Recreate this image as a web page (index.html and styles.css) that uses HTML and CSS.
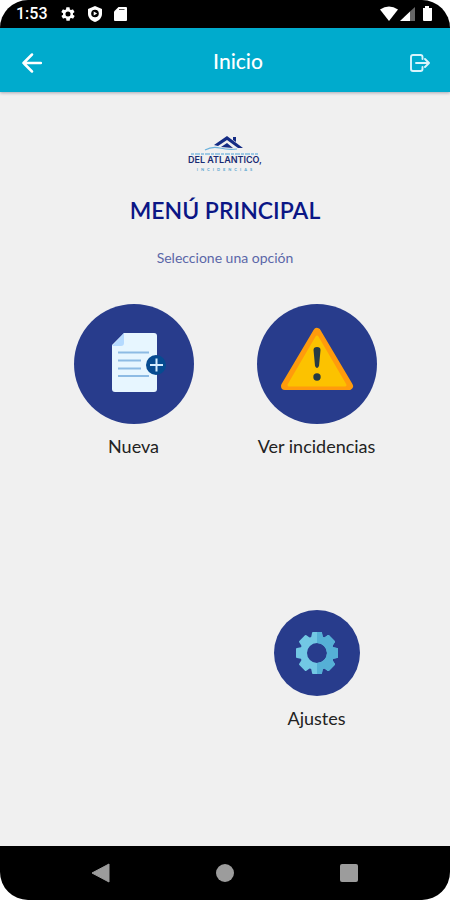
FILE: index.html
```html
<!DOCTYPE html>
<html lang="es">
<head>
<meta charset="utf-8">
<meta name="viewport" content="width=device-width, initial-scale=1">
<title>Inicio</title>
<link rel="stylesheet" href="styles.css">
</head>
<body>
<div class="phone">
  <div class="status">
    <span class="clock">1:53</span>
    <svg class="status-icon" width="16" height="16" viewBox="0 0 24 24" aria-hidden="true"><path fill="#fff" fill-rule="evenodd" d="M19.4 13a7.800 7.800 0 0 0 0-2l2.100-1.600a.5.5 0 0 0 .1-.7l-2-3.400a.5.500 0 0 0-.6-.2l-2.500 1a7.300 7.300 0 0 0-1.700-1l-.4-2.700a.5.500 0 0 0-.5-.4h-4a.5.500 0 0 0-.5.400l-.4 2.700a7.300 7.300 0 0 0-1.700 1l-2.500-1a.5.500 0 0 0-.6.200l-2 3.400a.5.500 0 0 0 .1.700L4.600 11a7.800 7.800 0 0 0 0 2l-2.100 1.600a.5.500 0 0 0-.1.700l2 3.400a.5.500 0 0 0 .6.200l2.500-1a7.300 7.300 0 0 0 1.700 1l.4 2.700c0 .2.300.4.500.4h4c.3 0 .5-.2.500-.4l.4-2.700a7.300 7.300 0 0 0 1.700-1l2.500 1c.2.100.5 0 .6-.2l2-3.400a.5.500 0 0 0-.1-.7zM12 15.800a3.800 3.800 0 1 1 0-7.600 3.800 3.800 0 0 1 0 7.600z"/></svg>
    <svg class="status-icon" width="14" height="16" viewBox="0 0 14 16" aria-hidden="true"><path fill="#fff" d="M7 0l7 3v5c0 3.500-3 7-7 8-4-1-7-4.500-7-8V3z"/><circle cx="7" cy="7.500" r="3.800" fill="#000"/><path fill="#fff" d="M5.700 5.500v4l3.500-2z"/></svg>
    <svg class="status-icon" width="13" height="16" viewBox="0 0 13 16" aria-hidden="true"><path fill="#fff" d="M4.500 1H12q1 0 1 1v12q0 1-1 1H1q-1 0-1-1V5.500z"/><path stroke="#555" stroke-width="1" d="M5 3.500h5.500"/></svg>
    <svg class="signals" width="54" height="16" viewBox="0 0 54 16" aria-hidden="true"><path fill="#fff" d="M0 3.500Q9-2.500 18 3.500L9 15z"/><path fill="#fff" d="M20 15L30 5.500V15z"/><path fill="#666" d="M30 5.500L35 1V15H30z"/><path fill="#fff" d="M45 0h4v2h3v12q0 1-1 1h-7q-1 0-1-1V2h2z"/></svg>
  </div>
  <header class="appbar">
    <button class="bar-button" type="button" aria-label="Volver"><svg width="20" height="20" viewBox="0 0 20 20"><path d="M19 10H1.500M10 1.500L1.500 10l8.500 8.500" fill="none" stroke="#fff" stroke-width="2.500" stroke-linecap="round" stroke-linejoin="round"/></svg></button>
    <h1 class="bar-title">Inicio</h1>
    <button class="bar-button" type="button" aria-label="Salir"><svg width="20" height="18" viewBox="0 0 20 18"><path d="M12.500 5V3q0-2-2-2H3Q1 1 1 3v12q0 2 2 2h7.500q2 0 2-2v-2M6 9h12.500M15 5l4 4-4 4" fill="none" stroke="#d8f4fc" stroke-width="1.900" stroke-linecap="round" stroke-linejoin="round"/></svg></button>
  </header>
  <main class="content">
    <svg class="logo" width="76" height="40" viewBox="0 0 76 40" role="img" aria-label="Del Atlántico, incidencias">
      <path d="M18 16Q25 12 33 14t17 1" fill="none" stroke="#6cb2dc" stroke-width="1.200"/>
      <path d="M27 11L40 2l16 12h-5L40 6l-9 6z" fill="#142c84"/>
      <path d="M34 13l6-4 6 5zM46 3h3v5l-3-2z" fill="#142c84"/>
      <path d="M4 20h67" stroke="#83bcdf" stroke-width="1.500" stroke-dasharray="3 1 5 1"/>
      <text class="logo-name" x="38" y="29" text-anchor="middle">DEL ATLANTICO,</text>
      <text class="logo-sub" x="39" y="37" text-anchor="middle">INCIDENCIAS</text>
    </svg>
    <h2 class="heading">MENÚ PRINCIPAL</h2>
    <p class="hint">Seleccione una opción</p>
    <nav class="menu">
      <button class="option" type="button">
        <span class="disc"><svg width="120" height="120" viewBox="0 0 120 120" aria-hidden="true">
          <path d="M50 29h30q3 0 3 3v53q0 3-3 3H41q-3 0-3-3V41z" fill="#e7f6ff"/>
          <path d="M50 29v10q0 3-3 3h-9z" fill="#b5daff"/>
          <path d="M44 48.500h31M44 56.500h23M44 64.500h23M44 72h31" stroke="#8dbbe4" stroke-width="2"/>
          <circle cx="82" cy="61" r="10" fill="#064b91"/>
          <path d="M76 61h13M82.500 54.500v13" stroke="#d5edff" stroke-width="2"/>
        </svg></span>
        <span class="label">Nueva</span>
      </button>
      <button class="option" type="button">
        <span class="disc"><svg width="120" height="120" viewBox="0 0 120 120" aria-hidden="true">
          <path d="M60 28L92 82H28z" fill="#ff9b0c" stroke="#ff9b0c" stroke-width="8" stroke-linejoin="round"/>
          <path d="M60 33L88 81H32z" fill="#fcc200" stroke="#fcc200" stroke-width="3" stroke-linejoin="round"/>
          <path d="M56.500 46q0-3 3.500-3t3.500 3l-1.500 16q-2 4-4 0z" fill="#263a45"/>
          <circle cx="60" cy="73" r="3.700" fill="#263a45"/>
        </svg></span>
        <span class="label">Ver incidencias</span>
      </button>
      <button class="option option-small" type="button">
        <span class="disc"><svg width="86" height="86" viewBox="-43 -43 86 86" aria-hidden="true">
          <defs>
            <g id="gear"><circle r="13.500" fill="none" stroke="currentColor" stroke-width="7"/><g fill="currentColor"><path id="tooth" d="M-6-15L-5-20q0-1 1-1H4q1 0 1 1L6-15z"/><use href="#tooth" transform="rotate(45)"/><use href="#tooth" transform="rotate(90)"/><use href="#tooth" transform="rotate(135)"/><use href="#tooth" transform="rotate(180)"/><use href="#tooth" transform="rotate(225)"/><use href="#tooth" transform="rotate(270)"/><use href="#tooth" transform="rotate(315)"/></g></g>
            <clipPath id="right"><path d="M0-24H24V24H0z"/></clipPath>
          </defs>
          <use href="#gear" color="#72c8e4"/>
          <g clip-path="url(#right)"><use href="#gear" color="#55b0d6"/></g>
        </svg></span>
        <span class="label">Ajustes</span>
      </button>
    </nav>
  </main>
  <div class="navbar">
    <button class="nav-button" type="button" aria-label="Atrás"><svg width="20" height="20" viewBox="0 0 20 20"><path d="M1 10L18 1v18z" fill="#9c9c9c" stroke="#9c9c9c" stroke-linejoin="round"/></svg></button>
    <button class="nav-button" type="button" aria-label="Inicio del teléfono"><svg width="20" height="20" viewBox="0 0 20 20"><circle cx="10" cy="10" r="9" fill="#9c9c9c"/></svg></button>
    <button class="nav-button" type="button" aria-label="Recientes"><svg width="20" height="20" viewBox="0 0 20 20"><rect x="1" y="1" width="18" height="18" rx="2" fill="#9c9c9c"/></svg></button>
  </div>
</div>
</body>
</html>
```

FILE: styles.css
```css
* {
  box-sizing: border-box;
}

body {
  margin: 0;
  background: #fff;
  font-family: Lato, "Liberation Sans", sans-serif;
}

button {
  padding: 0;
  border: 0;
  background: none;
  color: inherit;
  font: inherit;
  cursor: pointer;
}

svg {
  display: block;
}

.phone {
  display: flex;
  flex-direction: column;
  min-height: 100vh;
  overflow: hidden;
  border-radius: 28px;
  background: #f0f0f0;
}

.status {
  display: flex;
  align-items: center;
  gap: 12px;
  height: 28px;
  padding: 0 16px;
  background: #000;
  color: #fff;
}

.clock {
  font: 500 16px/28px Roboto, sans-serif;
}

.signals {
  margin-left: auto;
}

.appbar {
  display: grid;
  grid-template-columns: 44px 1fr 20px;
  align-items: center;
  height: 64px;
  padding: 6px 20px 0 22px;
  background: #00abcd;
  color: #fff;
  box-shadow: 0 1px 3px rgba(0, 0, 40, 0.3);
}

.bar-title {
  margin: 0;
  padding-bottom: 4px;
  font-size: 21px;
  font-weight: 500;
  line-height: 28px;
  text-align: center;
}

.content {
  display: flex;
  flex: 1;
  flex-direction: column;
  align-items: center;
  padding-top: 42px;
}

.logo-name {
  fill: #172a73;
  font-family: Inter, sans-serif;
  font-size: 9px;
  font-weight: 600;
}

.logo-sub {
  fill: #55a4cf;
  font-size: 4px;
  font-weight: 700;
  letter-spacing: 3px;
}

.heading {
  margin: 22px 0 0;
  color: #0b1685;
  font-size: 23px;
  font-weight: 600;
  line-height: 28px;
}

.hint {
  margin: 24px 0 0;
  color: #5b67a8;
  font-size: 14px;
  line-height: 20px;
}

.menu {
  display: grid;
  grid-template-columns: 1fr 1fr;
  row-gap: 152px;
  width: 100%;
  padding: 36px 42px 0;
}

.option {
  display: flex;
  flex-direction: column;
  align-items: center;
  gap: 10px;
  color: #222;
}

.option-small {
  grid-column: 2;
}

.disc {
  overflow: hidden;
  border-radius: 50%;
  background: #283c8c;
}

.label {
  font-size: 18px;
  line-height: 24px;
}

.navbar {
  display: flex;
  align-items: center;
  justify-content: center;
  gap: 104px;
  height: 54px;
  background: #000;
}
```
